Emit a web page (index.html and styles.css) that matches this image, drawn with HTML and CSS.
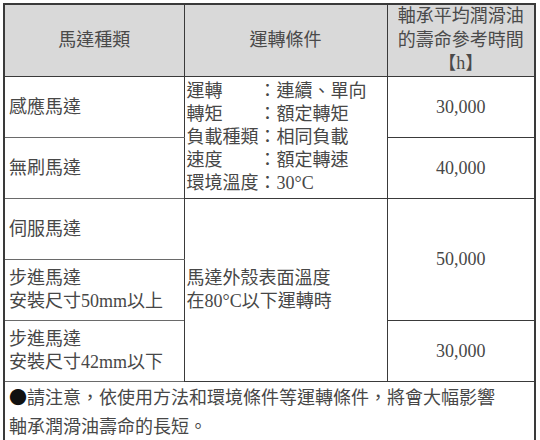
FILE: index.html
```html
<!DOCTYPE html>
<html lang="zh-Hant">
<head>
<meta charset="utf-8">
<link rel="stylesheet" href="styles.css">
</head>
<body>
<table class="spec">
  <colgroup>
    <col class="c1">
    <col class="c2">
    <col class="c3">
  </colgroup>
  <tr class="head">
    <th>馬達種類</th>
    <th>運轉條件</th>
    <th class="h3">軸承平均潤滑油<br>的壽命參考時間<br>【h】</th>
  </tr>
  <tr class="r">
    <td class="name">感應馬達</td>
    <td class="cond" rowspan="2">運轉　　：連續、單向<br>轉矩　　：額定轉矩<br>負載種類：相同負載<br>速度　　：額定轉速<br>環境溫度：30°C</td>
    <td class="val">30,000</td>
  </tr>
  <tr class="r">
    <td class="name">無刷馬達</td>
    <td class="val">40,000</td>
  </tr>
  <tr class="r">
    <td class="name">伺服馬達</td>
    <td class="cond" rowspan="3">馬達外殼表面溫度<br>在80°C以下運轉時</td>
    <td class="val" rowspan="2">50,000</td>
  </tr>
  <tr class="r">
    <td class="name">步進馬達<br>安裝尺寸50mm以上</td>
  </tr>
  <tr class="r">
    <td class="name">步進馬達<br>安裝尺寸42mm以下</td>
    <td class="val">30,000</td>
  </tr>
  <tr class="note">
    <td colspan="3"><span class="dot">●</span>請注意，依使用方法和環境條件等運轉條件，將會大幅影響<br>軸承潤滑油壽命的長短。</td>
  </tr>
</table>
</body>
</html>
```

FILE: styles.css
```css
html, body {
  margin: 0;
  padding: 0;
  background: #ffffff;
}

body {
  padding: 3px 0 0 3px;
  font-family: "Liberation Serif", "Noto Sans CJK TC", serif;
  font-size: 18px;
  color: #474747;
}

.spec {
  border-collapse: collapse;
  table-layout: fixed;
  width: 531px;
  border: 2px solid #3a3a3a;
}

.c1 { width: 180px; }
.c2 { width: 203px; }
.c3 { width: 148px; }

.spec th,
.spec td {
  border: 1px solid #3a3a3a;
  padding: 0 4px;
  line-height: 23px;
  font-weight: normal;
}

.head th {
  background: #d9d9d9;
  height: 71px;
  text-align: center;
  vertical-align: middle;
  color: #4a4a4a;
}

.head .h3 {
  line-height: 23.5px;
  padding: 0;
}

.r td {
  height: 60px;
  vertical-align: middle;
}

.r .name {
  text-align: left;
  border-bottom-color: #6a6a6a;
}

.r .cond {
  text-align: left;
  padding: 0 2px;
  white-space: nowrap;
}

.r .val {
  text-align: center;
}

.note td {
  height: 58px;
  line-height: 29px;
  text-align: left;
  vertical-align: middle;
  padding: 0 4px;
}

.dot {
  font-family: "Noto Sans CJK TC", sans-serif;
  color: #111111;
}
```
